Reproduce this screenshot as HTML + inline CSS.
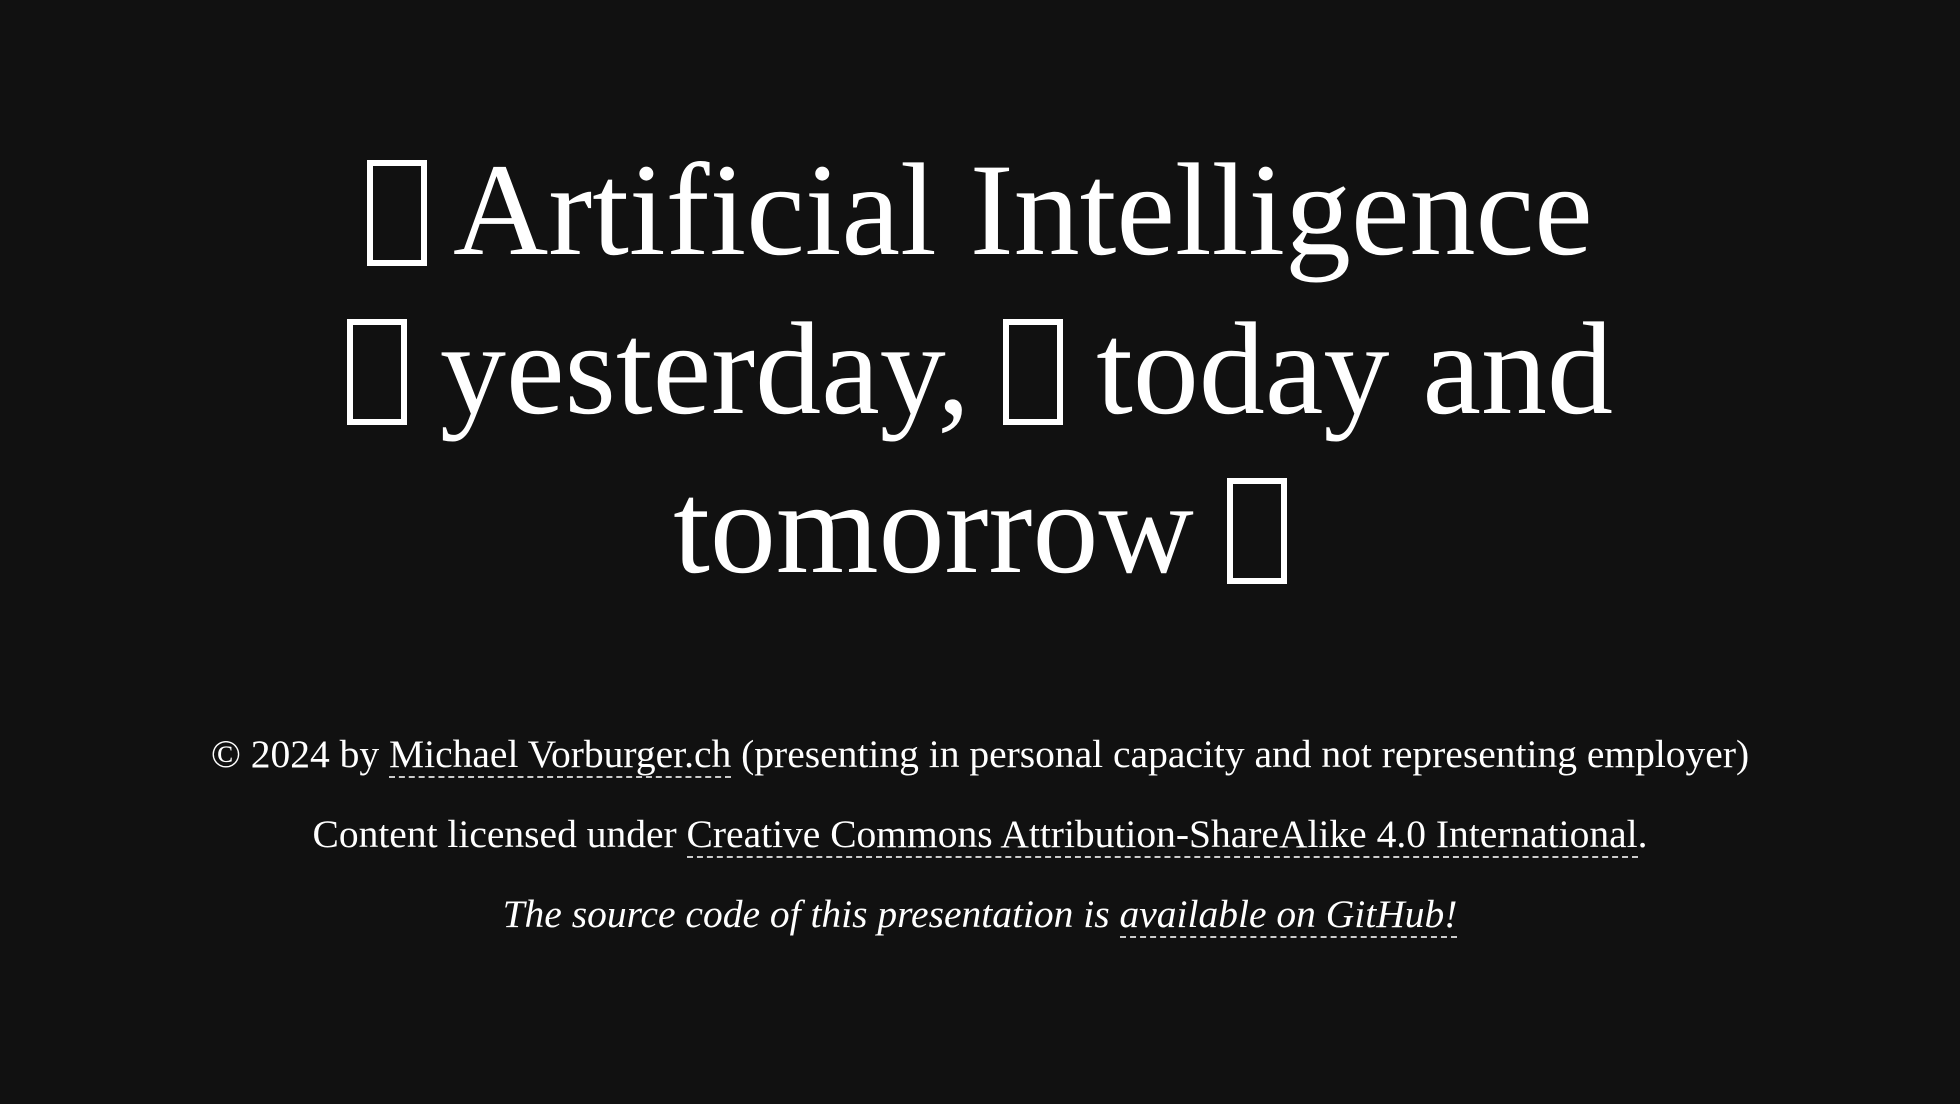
<!DOCTYPE html>
<html><head><meta charset="utf-8"><style>
html,body{margin:0;padding:0;background:#111;width:1960px;height:1104px;overflow:hidden}
body{font-family:"Liberation Serif",serif;color:#fff}
h1{position:absolute;left:0;top:130px;width:1960px;margin:0;text-align:center;font-weight:normal;font-size:132px;line-height:159px}
.b{display:inline-block;width:48px;height:94px;border:6px solid #fff;vertical-align:-12px}
.f{position:absolute;left:0;width:1960px;text-align:center;font-size:39.5px;line-height:40px;white-space:nowrap}
a{color:#fff;text-decoration:none;border-bottom:2px dashed #ccc}
</style></head><body>
<h1><span class="b"></span> Artificial Intelligence<br><span class="b"></span> yesterday, <span class="b"></span> today and<br>tomorrow <span class="b"></span></h1>
<div class="f" style="top:734px">© 2024 by <a>Michael Vorburger.ch</a> (presenting in personal capacity and not representing employer)</div>
<div class="f" style="top:814px">Content licensed under <a>Creative Commons Attribution-ShareAlike 4.0 International</a>.</div>
<div class="f" style="top:894px"><i>The source code of this presentation is <a>available on GitHub!</a></i></div>
</body></html>
